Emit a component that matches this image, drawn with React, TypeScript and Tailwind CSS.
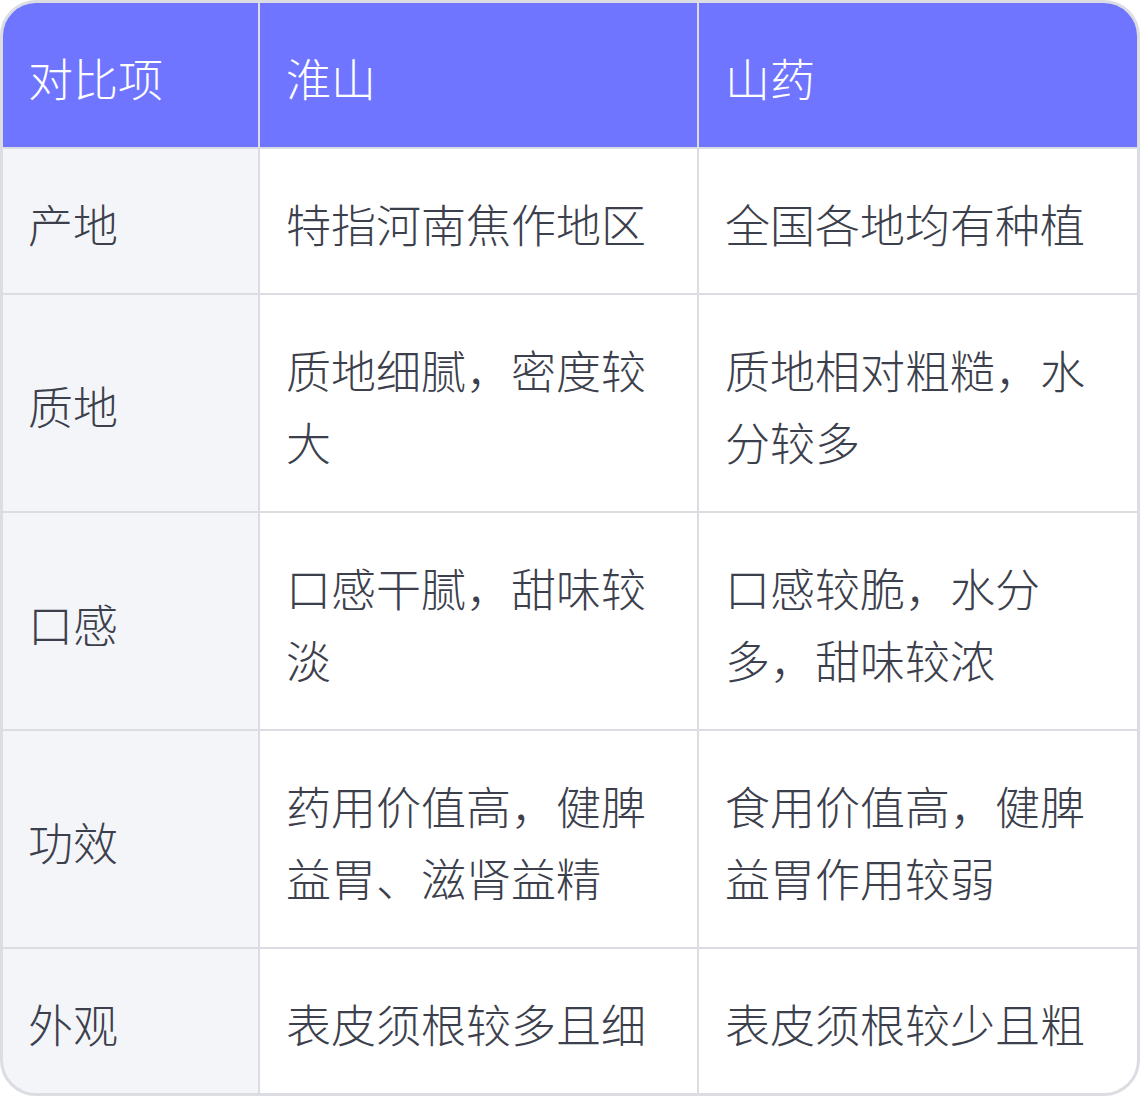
import React from "react";

const rows = [
  { item: "产地", huai: "特指河南焦作地区", shan: "全国各地均有种植" },
  { item: "质地", huai: "质地细腻，密度较大", shan: "质地相对粗糙，水分较多" },
  { item: "口感", huai: "口感干腻，甜味较淡", shan: "口感较脆，水分多，甜味较浓" },
  { item: "功效", huai: "药用价值高，健脾益胃、滋肾益精", shan: "食用价值高，健脾益胃作用较弱" },
  { item: "外观", huai: "表皮须根较多且细", shan: "表皮须根较少且粗" },
];

const font = { fontFamily: '"Noto Sans CJK SC", "Noto Sans", sans-serif' };

export default function App() {
  return (
    <div className="w-[1140px] bg-white" style={font}>
      <div className="grid grid-cols-[255px_437px_438px] gap-[2px] overflow-hidden rounded-[36px] border-[3px] border-[#dcdde3] bg-[#dcdde3] text-[45px] font-light leading-[72px] text-[#3c404c]">
        <div className="flex h-[144px] items-center bg-[#6f75ff] pl-[25px] pr-[27px] pt-[6px] text-white">对比项</div>
        <div className="flex h-[144px] items-center bg-[#6f75ff] pl-[26px] pr-[28px] pt-[6px] text-white">淮山</div>
        <div className="flex h-[144px] items-center bg-[#6f75ff] pl-[26px] pr-[28px] pt-[6px] text-white">山药</div>
        {rows.map((r) => (
          <React.Fragment key={r.item}>
            <div className="flex items-center bg-[#f4f5f9] pl-[25px] pr-[27px] pt-[6px]">{r.item}</div>
            <div className="bg-white pb-[33px] pl-[26px] pr-[28px] pt-[39px]">{r.huai}</div>
            <div className="bg-white pb-[33px] pl-[26px] pr-[28px] pt-[39px]">{r.shan}</div>
          </React.Fragment>
        ))}
      </div>
    </div>
  );
}
